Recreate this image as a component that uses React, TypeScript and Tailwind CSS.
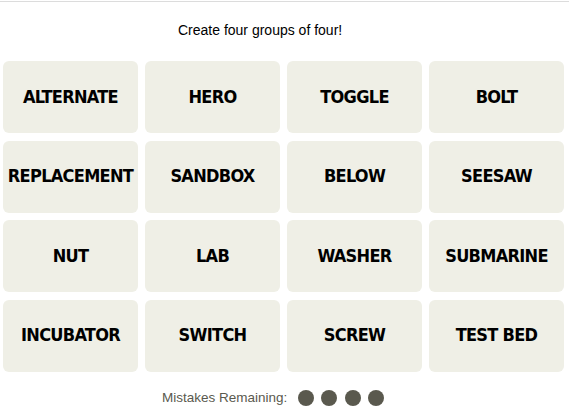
const WORDS = [
  'ALTERNATE', 'HERO', 'TOGGLE', 'BOLT',
  'REPLACEMENT', 'SANDBOX', 'BELOW', 'SEESAW',
  'NUT', 'LAB', 'WASHER', 'SUBMARINE',
  'INCUBATOR', 'SWITCH', 'SCREW', 'TEST BED',
];

export default function App() {
  return (
    <div className="w-[569px] h-[410px] bg-white overflow-hidden" style={{ fontFamily: '"Liberation Sans", Arial, sans-serif' }}>
      <div className="mt-px border-t border-[#dcdcdc]" />
      <p className="mt-[18px] ml-[178px] text-[14px] leading-5 text-black">Create four groups of four!</p>
      <div className="mt-[21px] ml-[3px] grid grid-cols-[repeat(4,135px)] grid-rows-[repeat(4,72px)] gap-x-[7px] gap-y-[7.5px]">
        {WORDS.map((w) => (
          <div
            key={w}
            className="flex items-center justify-center pb-[2px] rounded-md bg-[#efefe6] text-[18px] font-bold text-black tracking-[-0.7px]"
            style={{ fontFamily: '"DejaVu Sans Condensed", "Liberation Sans", sans-serif' }}
          >
            {w}
          </div>
        ))}
      </div>
      <div className="mt-[16px] ml-[162px] flex items-center gap-[7.5px]">
        <span className="text-[13.5px] text-[#5a594e] mr-[3px]">Mistakes Remaining:</span>
        {[0, 1, 2, 3].map((i) => (
          <span key={i} className="w-4 h-4 rounded-full bg-[#5a594e]" />
        ))}
      </div>
    </div>
  );
}
